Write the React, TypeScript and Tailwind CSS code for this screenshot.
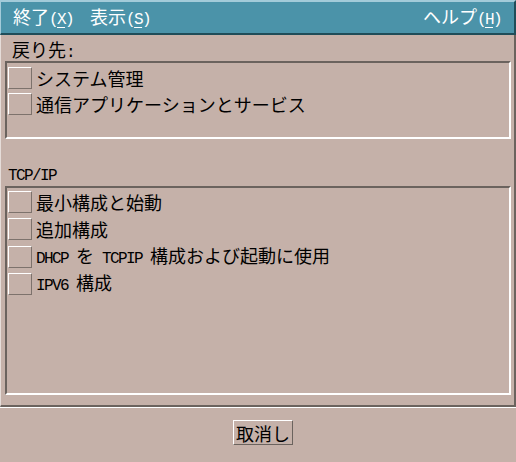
import React from "react";

const CJK = '"Noto Sans CJK JP", "Noto Sans CJK SC", sans-serif';

// half-width latin parts are drawn in a mono face, 8px wide like the bitmap font
const M: React.FC<{ children: React.ReactNode }> = ({ children }) => (
  <span className="font-['Liberation_Mono',monospace] text-[16px] tracking-[-1.6px] whitespace-pre">
    {children}
  </span>
);

const MenuItem: React.FC<{ label: string; mnemonic: string }> = ({ label, mnemonic }) => (
  <span className="whitespace-pre">
    {label}
    <M>(</M>
    <span className="underline decoration-1 underline-offset-[3px]">
      <M>{mnemonic}</M>
    </span>
    <M>)</M>
  </span>
);

const Check: React.FC = () => (
  <div className="w-[24px] h-[22px] shrink-0 border-t border-l border-t-white border-l-white border-b border-r border-b-[#7d726c] border-r-[#7d726c]" />
);

const Row: React.FC<{ h: string; children: React.ReactNode }> = ({ h, children }) => (
  <div className={`flex items-center gap-[4px] ${h}`}>
    <Check />
    <div className="whitespace-pre leading-[20px]">{children}</div>
  </div>
);

const ListBox: React.FC<{ h: string; pt: string; children: React.ReactNode }> = ({ h, pt, children }) => (
  <div
    className={`ml-[4px] mr-[3px] ${h} ${pt} pl-[1px] border-2 border-t-[#6b635e] border-l-[#6b635e] border-b-white border-r-white`}
  >
    {children}
  </div>
);

export default function App() {
  return (
    <div
      className="w-[516px] h-[462px] bg-[#c5b1a9] text-black text-[18px] leading-[20px] flex flex-col overflow-hidden"
      style={{ fontFamily: CJK }}
    >
      {/* menu bar */}
      <div className="h-[35px] shrink-0 bg-[#4b93a9] text-white border-t-2 border-t-[#a3cbd9] border-l border-l-[#a3cbd9] border-b-2 border-b-[#1f4d59] border-r-2 border-r-[#1f4d59] flex items-center pl-[12px] pr-[13px]">
        <MenuItem label="終了" mnemonic="X" />
        <div className="ml-[17px]">
          <MenuItem label="表示" mnemonic="S" />
        </div>
        <div className="ml-auto">
          <MenuItem label="ヘルプ" mnemonic="H" />
        </div>
      </div>

      {/* main panel */}
      <div className="h-[372px] shrink-0 flex flex-col border-l border-l-[#e6ddd9] border-r-2 border-r-[#6b635e] border-b-2 border-b-[#6b635e]">
        <div className="h-[26px] pt-[6px] pl-[11px] flex items-center">
          <span className="whitespace-pre">
            戻り先<M>:</M>
          </span>
        </div>

        <ListBox h="h-[78px]" pt="pt-[2px]">
          <Row h="h-[26px]">システム管理</Row>
          <Row h="h-[26px]">通信アプリケーションとサービス</Row>
        </ListBox>

        <div className="h-[47px] pl-[7px] pb-[0px] flex items-end">
          <M>TCP/IP</M>
        </div>

        <ListBox h="h-[209px]" pt="pt-[0px]">
          <Row h="h-[27.5px]">最小構成と始動</Row>
          <Row h="h-[27.5px]">追加構成</Row>
          <Row h="h-[27.5px]">
            <M>DHCP </M>を<M> TCPIP </M>構成および起動に使用
          </Row>
          <Row h="h-[27.5px]">
            <M>IPV6 </M>構成
          </Row>
        </ListBox>
      </div>

      {/* footer */}
      <div className="flex-1 border-t border-t-white pt-[12px] pl-[233px]">
        <button className="w-[60px] h-[25px] flex items-center justify-center border-t border-l border-t-white border-l-white border-b border-r border-b-[#6b635e] border-r-[#6b635e]">
          取消し
        </button>
      </div>
    </div>
  );
}
